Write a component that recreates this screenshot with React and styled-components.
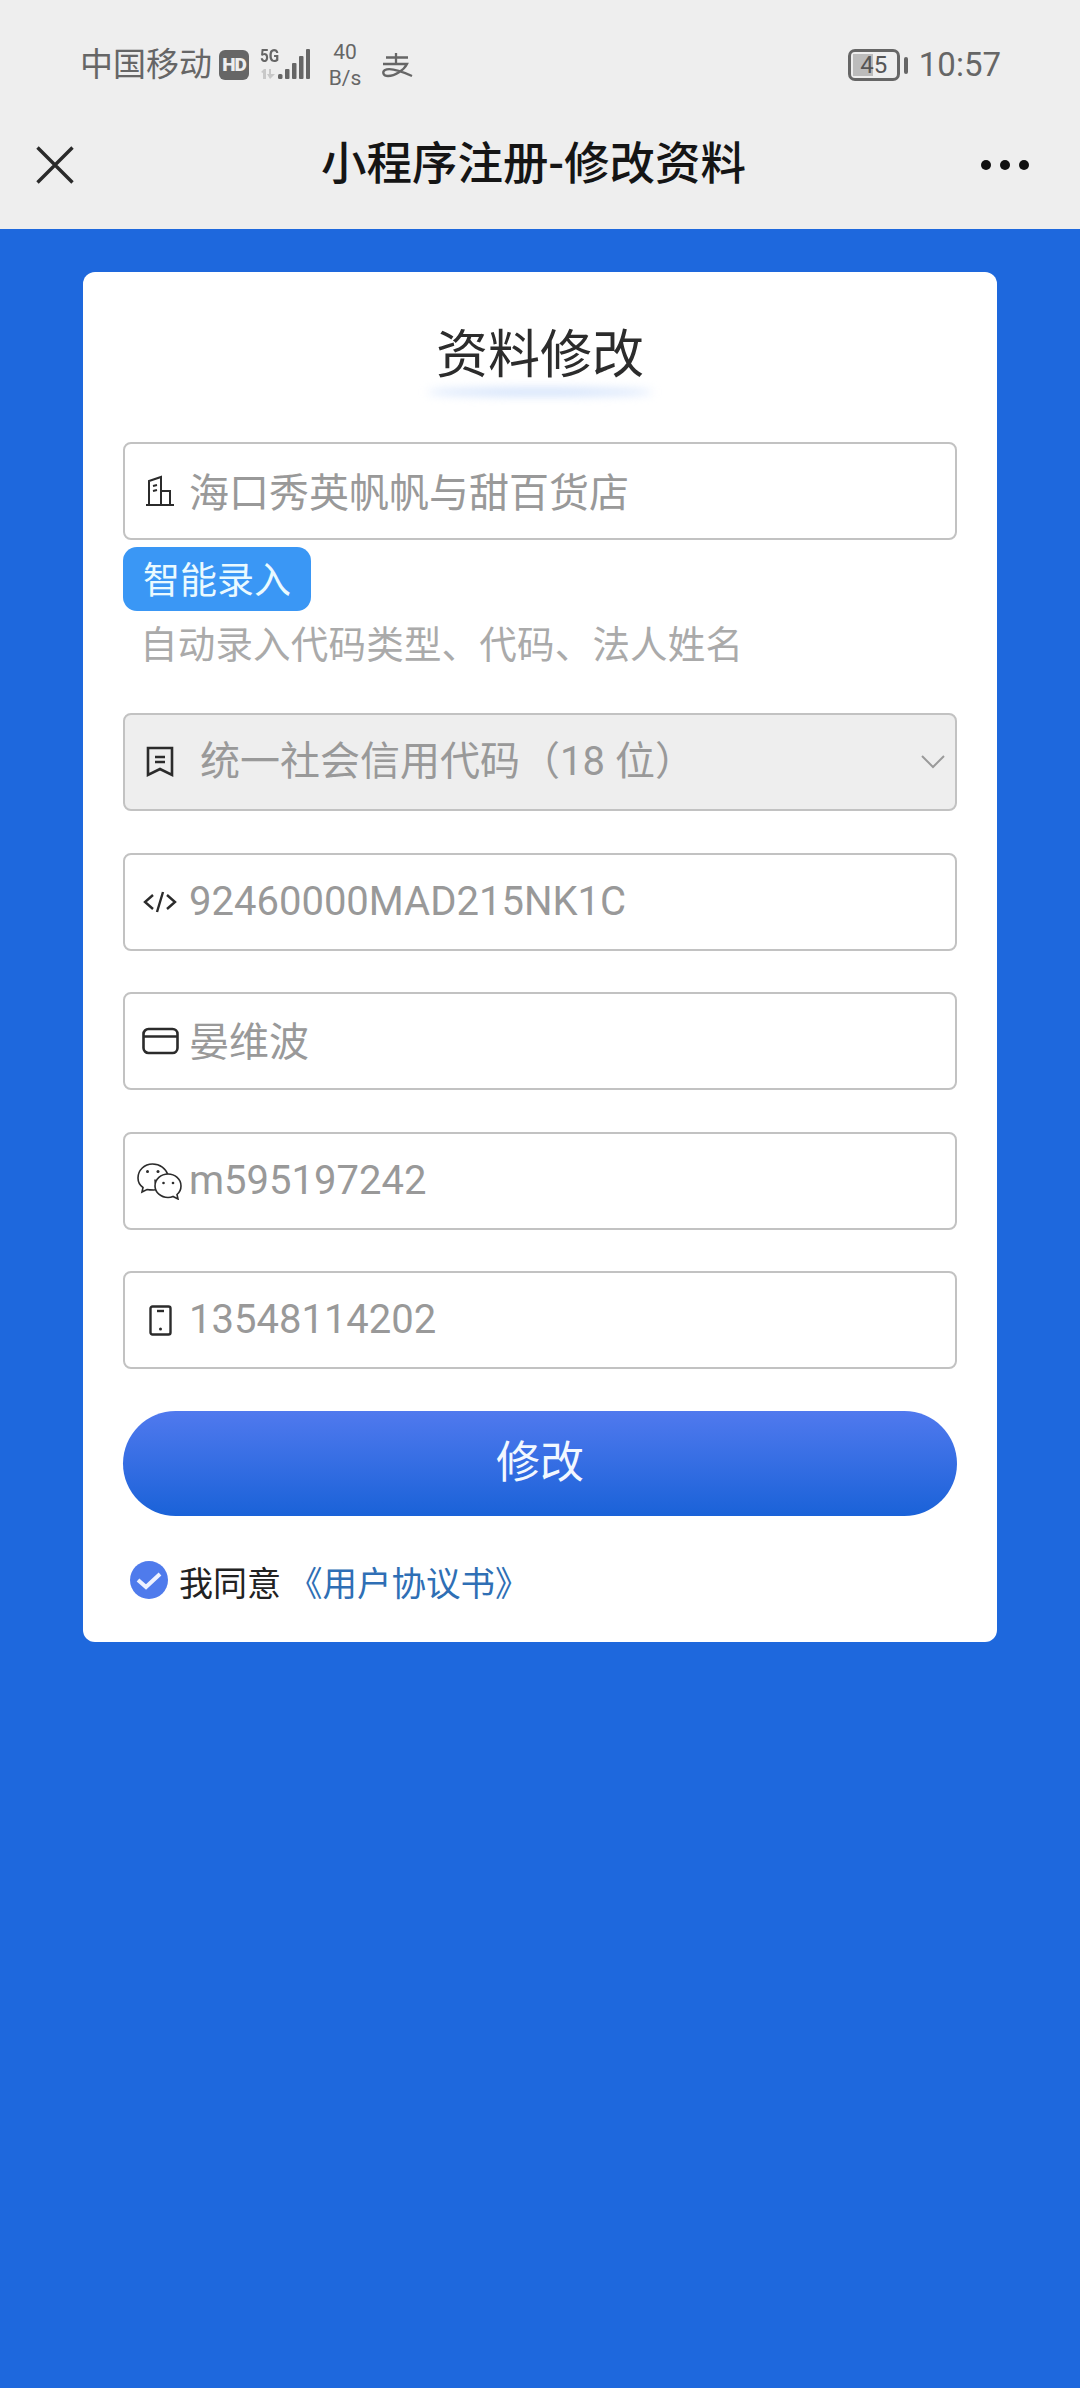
import React from 'react';
import styled, { createGlobalStyle } from 'styled-components';

const GlobalStyle = createGlobalStyle`
  html, body {
    margin: 0;
    padding: 0;
    background: #1e68dd;
  }
  * {
    box-sizing: border-box;
  }
`;

const FONT = `Roboto, "Noto Sans CJK SC", sans-serif`;

const BuildingIcon = () => (
  <svg width="30" height="32" viewBox="0 0 30 32" fill="none" stroke="#2b2b2b" strokeWidth="2">
    <path d="M1 30H29M4 30V6L16 2V30M16 16H25V30" />
    <path d="M8 11L12 10M8 16L12 15" />
  </svg>
);

const BookmarkIcon = () => (
  <svg width="28" height="32" viewBox="0 0 28 32" fill="none" stroke="#2b2b2b" strokeWidth="2.6">
    <path d="M2 2H26V29L14 23L2 29Z" />
    <path d="M9 11H19M9 16H19" />
  </svg>
);

const CodeIcon = () => (
  <svg width="34" height="24" viewBox="0 0 34 24" fill="none" stroke="#2b2b2b" strokeWidth="2.4">
    <path d="M10 5L2 12L10 19M24 5L32 12L24 19M20 2L14 22" />
  </svg>
);

const CardIcon = () => (
  <svg width="37" height="28" viewBox="0 0 37 28" fill="none" stroke="#2b2b2b" strokeWidth="2.6">
    <rect x="1.5" y="2" width="34" height="24" rx="5" />
    <path d="M1.5 9.500H35.500" />
  </svg>
);

const WechatIcon = () => (
  <svg width="46" height="38" viewBox="0 0 46 38" fill="none" stroke="#2b2b2b" strokeWidth="1.6">
    <path d="M18 17.5C18 23 22 28 17 28C14 28 12 28 10 27.5L5 30L6 25.5C2.500 23 1 20 1 16C1 8 7.500 2 15.500 2C23 2 29 6.500 31 13" />
    <path d="M31 12C38 12 44 17 44 24C44 27.500 42.500 30.500 40 32.500L41 37L36 34.500C34.500 35.200 33 35.500 31 35.500C24 35.500 18 30.500 18 24C18 17 24 12 31 12Z" fill="#fff" />
    <circle cx="10.500" cy="9.500" r="1.500" fill="#2b2b2b" stroke="none" />
    <circle cx="21" cy="9.500" r="1.500" fill="#2b2b2b" stroke="none" />
    <circle cx="26.500" cy="21" r="1.300" fill="#2b2b2b" stroke="none" />
    <circle cx="36" cy="21" r="1.300" fill="#2b2b2b" stroke="none" />
  </svg>
);

const PhoneIcon = () => (
  <svg width="23" height="31" viewBox="0 0 23 31" fill="none" stroke="#2b2b2b" strokeWidth="2.4">
    <rect x="1.500" y="1.500" width="20" height="28" rx="2" />
    <path d="M8 6H15" strokeWidth="2.400" />
    <circle cx="11.500" cy="24" r="1.500" fill="#2b2b2b" stroke="none" />
  </svg>
);

const Chevron = () => (
  <svg width="24" height="14" viewBox="0 0 24 14" fill="none" stroke="#9a9a9a" strokeWidth="2">
    <path d="M1 1L12 12L23 1" />
  </svg>
);

const CloseIcon = () => (
  <svg width="38" height="38" viewBox="0 0 38 38" fill="none" stroke="#2a2a2a" strokeWidth="3.400">
    <path d="M1.500 1.500L36.500 36.500M36.500 1.500L1.500 36.500" />
  </svg>
);

const SignalIcon = () => (
  <svg width="50" height="32" viewBox="0 0 50 32" fill="#666666">
    <rect x="18" y="25" width="4.500" height="5" rx="1.500" />
    <rect x="25" y="20" width="4.500" height="10" rx="1" />
    <rect x="32" y="14" width="4.500" height="16" rx="1" />
    <rect x="39" y="7" width="4.500" height="23" rx="1" />
    <rect x="46" y="0" width="4" height="30" rx="1" />
    <path d="M1 23L4 20H6V30H3V24ZM9 20H11V25H15L10 30L7 25H9Z" fill="#c8c8c8" />
  </svg>
);

const AlipayIcon = () => (
  <svg width="32" height="26" viewBox="0 0 32 26" fill="none" stroke="#666666" strokeWidth="2.300">
    <path d="M5 5.500H27M15 1V12M2 12H26C23 18 14 24 7 24C2 24 1 20 4 18C10 15 22 20 31 24" />
  </svg>
);

const CheckIcon = () => (
  <svg width="38" height="38" viewBox="0 0 38 38">
    <circle cx="19" cy="19" r="19" fill="#4f7bec" />
    <path d="M8 19L16 26L30 13" fill="none" stroke="#eef2ff" strokeWidth="4" />
  </svg>
);

const App = () => {
  return (
    <Page>
      <GlobalStyle />
      <TopBar>
        <StatusBar>
          <StatusLeft>
            <Carrier>中国移动</Carrier>
            <HdBadge>HD</HdBadge>
            <NetworkGroup>
              <FiveG>5G</FiveG>
              <SignalIcon />
            </NetworkGroup>
            <Speed>
              <span>40</span>
              <span>B/s</span>
            </Speed>
            <AlipaySlot>
              <AlipayIcon />
            </AlipaySlot>
          </StatusLeft>
          <StatusRight>
            <Battery>
              <BatteryFill />
              <BatteryText>45</BatteryText>
            </Battery>
            <BatteryNub />
            <Clock>10:57</Clock>
          </StatusRight>
        </StatusBar>
        <NavBar>
          <CloseSlot>
            <CloseIcon />
          </CloseSlot>
          <NavTitle>小程序注册-修改资料</NavTitle>
          <MoreDots>
            <Dot />
            <Dot />
            <Dot />
          </MoreDots>
        </NavBar>
      </TopBar>

      <Card>
        <CardTitle>资料修改</CardTitle>
        <TitleGlow />

        <Field $gap="7px">
          <IconSlot><BuildingIcon /></IconSlot>
          <FieldValue $drop="6px">海口秀英帆帆与甜百货店</FieldValue>
        </Field>
        <SmartButton>智能录入</SmartButton>
        <Hint>自动录入代码类型、代码、法人姓名</Hint>

        <Field $select>
          <IconSlot><BookmarkIcon /></IconSlot>
          <FieldValue $select>统一社会信用代码（18 位）</FieldValue>
          <ChevronSlot><Chevron /></ChevronSlot>
        </Field>
        <Field>
          <IconSlot><CodeIcon /></IconSlot>
          <FieldValue>92460000MAD215NK1C</FieldValue>
        </Field>
        <Field>
          <IconSlot><CardIcon /></IconSlot>
          <FieldValue $drop="3px">晏维波</FieldValue>
        </Field>
        <Field>
          <IconSlot><WechatIcon /></IconSlot>
          <FieldValue>m595197242</FieldValue>
        </Field>
        <Field>
          <IconSlot><PhoneIcon /></IconSlot>
          <FieldValue>13548114202</FieldValue>
        </Field>

        <SubmitButton>修改</SubmitButton>

        <AgreeRow>
          <CheckIcon />
          <AgreeText>我同意</AgreeText>
          <AgreeLink>《用户协议书》</AgreeLink>
        </AgreeRow>
      </Card>
    </Page>
  );
};

const Page = styled.div`
  width: 1080px;
  height: 2388px;
  background: #1e68dd;
  font-family: ${FONT};
  overflow: hidden;
`;

const TopBar = styled.header`
  height: 229px;
  background: #eeeeee;
  padding-top: 10px;
`;

const StatusBar = styled.div`
  height: 110px;
  display: flex;
  align-items: center;
  justify-content: space-between;
  padding: 0 79px 0 80px;
  color: #666666;
`;

const StatusLeft = styled.div`
  display: flex;
  align-items: center;
`;

const Carrier = styled.span`
  font-size: 33px;
  line-height: 40px;
`;

const HdBadge = styled.span`
  width: 30px;
  height: 30px;
  margin-left: 7px;
  border-radius: 6px;
  background: #666666;
  color: #eeeeee;
  font-size: 19px;
  font-weight: 900;
  line-height: 30px;
  text-align: center;
  letter-spacing: -1px;
`;

const NetworkGroup = styled.div`
  position: relative;
  width: 50px;
  height: 32px;
  margin-left: 11px;
`;

const FiveG = styled.span`
  position: absolute;
  top: -3px;
  left: 0;
  font-size: 18px;
  font-weight: 700;
  line-height: 20px;
  transform: scaleX(0.85);
  transform-origin: left center;
`;

const Speed = styled.div`
  display: flex;
  flex-direction: column;
  align-items: center;
  width: 36px;
  margin-left: 17px;
  font-size: 21px;
  line-height: 26px;
`;

const AlipaySlot = styled.div`
  display: flex;
  margin-left: 18px;
`;

const StatusRight = styled.div`
  display: flex;
  align-items: center;
`;

const Battery = styled.div`
  position: relative;
  width: 52px;
  height: 32px;
  border: 3px solid #666666;
  border-radius: 7px;
  display: flex;
  align-items: center;
  justify-content: center;
`;

const BatteryFill = styled.div`
  position: absolute;
  top: 2px;
  bottom: 2px;
  left: 2px;
  width: 20px;
  background: #bcbcbc;
`;

const BatteryText = styled.span`
  position: relative;
  font-size: 24px;
  line-height: 26px;
  color: #555555;
`;

const BatteryNub = styled.div`
  width: 4px;
  height: 17px;
  margin-left: 4px;
  border-radius: 2px;
  background: #666666;
`;

const Clock = styled.span`
  margin-left: 11px;
  font-size: 33px;
  line-height: 40px;
`;

const NavBar = styled.div`
  display: grid;
  grid-template-columns: 321px 427px 1fr;
  align-items: center;
  height: 90px;
`;

const CloseSlot = styled.div`
  display: flex;
  padding-left: 36px;
`;

const NavTitle = styled.h1`
  margin: 0;
  font-size: 45.5px;
  font-weight: 500;
  line-height: 56px;
  color: #151515;
  white-space: nowrap;
`;

const MoreDots = styled.div`
  display: flex;
  justify-content: flex-end;
  gap: 9px;
  padding-right: 51px;
`;

const Dot = styled.span`
  width: 10px;
  height: 10px;
  border-radius: 50%;
  background: #111111;
`;

const Card = styled.main`
  width: 914px;
  height: 1370px;
  margin: 43px 0 0 83px;
  padding: 52px 40px 0;
  background: #ffffff;
  border-radius: 12px;
`;

const CardTitle = styled.h2`
  margin: 0;
  font-size: 52px;
  font-weight: 400;
  line-height: 64px;
  color: #2c2c2c;
  text-align: center;
`;

const TitleGlow = styled.div`
  width: 226px;
  height: 8px;
  margin: 0 auto 46px;
  border-radius: 50%;
  background: #cfe0fb;
  filter: blur(5px);
`;

const Field = styled.div`
  display: flex;
  align-items: center;
  height: 98px;
  margin-bottom: ${(p) => p.$gap || '41.5px'};
  padding-left: 12px;
  border: 2px solid #c2c2c2;
  border-radius: 8px;
  background: ${(p) => (p.$select ? '#eeeeee' : '#ffffff')};
`;

const IconSlot = styled.div`
  display: flex;
  align-items: center;
  justify-content: center;
  flex: none;
  width: 46px;
`;

const FieldValue = styled.span`
  margin-left: ${(p) => (p.$select ? '17px' : '6px')};
  padding-top: ${(p) => p.$drop || '0'};
  font-size: 40px;
  line-height: 50px;
  color: #999999;
  white-space: nowrap;
`;

const ChevronSlot = styled.div`
  display: flex;
  margin-left: auto;
  padding-right: 10px;
`;

const SmartButton = styled.button`
  display: block;
  width: 188px;
  height: 64px;
  padding: 6px 0 0;
  border: none;
  border-radius: 14px;
  background: #3a97f5;
  color: #eafaff;
  font-family: ${FONT};
  font-size: 37px;
  line-height: 58px;
  text-align: center;
`;

const Hint = styled.p`
  margin: 9px 0 43px 17px;
  font-size: 37.5px;
  letter-spacing: 0.2px;
  line-height: 50px;
  color: #aaaaaa;
`;

const SubmitButton = styled.button`
  display: block;
  width: 834px;
  height: 105px;
  padding: 0;
  border: none;
  border-radius: 53px;
  background: linear-gradient(180deg, #5079ee 0%, #1a62d8 100%);
  color: #f2f8ff;
  font-family: ${FONT};
  font-size: 44px;
  line-height: 105px;
  text-align: center;
`;

const AgreeRow = styled.div`
  display: flex;
  align-items: center;
  height: 46px;
  margin-top: 41px;
  padding-left: 7px;
`;

const AgreeText = styled.span`
  margin-left: 11px;
  padding-top: 8px;
  font-size: 34px;
  line-height: 46px;
  color: #222222;
`;

const AgreeLink = styled.span`
  margin-left: 7px;
  padding-top: 8px;
  font-size: 34.5px;
  line-height: 46px;
  color: #2f6fb5;
`;

export default App;
